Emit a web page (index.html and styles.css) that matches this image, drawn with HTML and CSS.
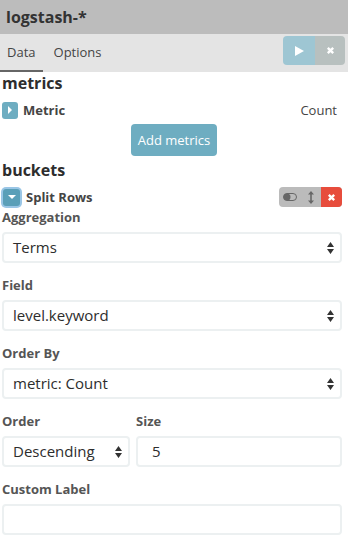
FILE: index.html
```html
<!DOCTYPE html>
<html lang="en">
<head>
    <meta charset="UTF-8">
    <title>logstash-*</title>
    <link rel="stylesheet" href="styles.css">
</head>
<body>
    <div class="sidebar">
        <div class="title">logstash-*</div>
        <div class="tabs">
            <div class="tab active">Data</div>
            <div class="tab">Options</div>
            <div class="actions">
                <button class="btn-apply">
                    <svg width="12" height="12" viewBox="0 0 12 12"><path d="M2 1 L11 6 L2 11 Z" fill="#fff"/></svg>
                </button>
                <button class="btn-discard">
                    <svg width="9" height="9" viewBox="0 0 10 10"><path d="M2 2 L8 8 M8 2 L2 8" stroke="#fff" stroke-width="2.6"/></svg>
                </button>
            </div>
        </div>

        <div class="content">
            <h2 class="first">metrics</h2>
            <div class="agg-row">
                <span class="toggle-icon">
                    <svg width="6" height="8" viewBox="0 0 6 8"><path d="M1 0 L5 4 L1 8 Z" fill="#fff"/></svg>
                </span>
                <span class="agg-name">Metric</span>
                <span class="agg-desc">Count</span>
            </div>
            <div class="add-row">
                <button class="btn-add">Add metrics</button>
            </div>

            <h2>buckets</h2>
            <div class="agg-row">
                <span class="toggle-icon open">
                    <svg width="8" height="6" viewBox="0 0 8 6"><path d="M0 1 L8 1 L4 5 Z" fill="#fff"/></svg>
                </span>
                <span class="agg-name">Split Rows</span>
                <span class="agg-controls">
                    <span class="ctl">
                        <svg width="14" height="8" viewBox="0 0 14 8"><rect x="0.5" y="0.5" width="13" height="7" rx="3.5" fill="none" stroke="#666" stroke-width="1"/><circle cx="4" cy="4" r="3.5" fill="#666"/></svg>
                    </span>
                    <span class="ctl">
                        <svg width="6" height="13" viewBox="0 0 6 13"><path d="M3 0 L6 3.5 L0 3.5 Z M3 13 L6 9.5 L0 9.5 Z" fill="#666"/><rect x="2.2" y="3" width="1.6" height="7" fill="#666"/></svg>
                    </span>
                    <span class="ctl ctl-remove">
                        <svg width="9" height="9" viewBox="0 0 10 10"><path d="M2 2 L8 8 M8 2 L2 8" stroke="#fff" stroke-width="2.6"/></svg>
                    </span>
                </span>
            </div>

            <div class="field">
                <label>Aggregation</label>
                <div class="select">Terms
                    <svg class="caret" width="7" height="12" viewBox="0 0 7 12"><path d="M3.5 0 L7 5 L0 5 Z M3.5 12 L7 7 L0 7 Z" fill="#333"/></svg>
                </div>
            </div>
            <div class="field">
                <label>Field</label>
                <div class="select">level.keyword
                    <svg class="caret" width="7" height="12" viewBox="0 0 7 12"><path d="M3.5 0 L7 5 L0 5 Z M3.5 12 L7 7 L0 7 Z" fill="#333"/></svg>
                </div>
            </div>
            <div class="field">
                <label>Order By</label>
                <div class="select">metric: Count
                    <svg class="caret" width="7" height="12" viewBox="0 0 7 12"><path d="M3.5 0 L7 5 L0 5 Z M3.5 12 L7 7 L0 7 Z" fill="#333"/></svg>
                </div>
            </div>
            <div class="field-row">
                <div class="field order">
                    <label>Order</label>
                    <div class="select">Descending
                        <svg class="caret" width="7" height="12" viewBox="0 0 7 12"><path d="M3.5 0 L7 5 L0 5 Z M3.5 12 L7 7 L0 7 Z" fill="#333"/></svg>
                    </div>
                </div>
                <div class="field size">
                    <label>Size</label>
                    <div class="input num">5</div>
                </div>
            </div>
            <div class="field">
                <label>Custom Label</label>
                <div class="input"></div>
            </div>
        </div>
    </div>
</body>
</html>
```

FILE: styles.css
```css
body {
    margin: 0;
    font-family: "Open Sans", "Liberation Sans", sans-serif;
    color: #444;
    background-color: #fff;
}

.sidebar {
    width: 348px;
}

.title {
    height: 34px;
    line-height: 34px;
    padding-left: 6px;
    background-color: #bcbcbc;
    font-size: 16px;
    font-weight: bold;
    color: #333;
}

.tabs {
    display: flex;
    align-items: stretch;
    height: 38px;
    background-color: #e4e4e4;
}

.tab {
    font-size: 13px;
    line-height: 36px;
    padding: 0 7px;
    margin-right: 4px;
    color: #444;
    border-bottom: 2px solid transparent;
}

.tab.active {
    border-bottom-color: #666;
}

.actions {
    margin-left: auto;
    display: flex;
    margin-top: 2px;
    margin-right: 3px;
    height: 29px;
    border-radius: 4px;
    overflow: hidden;
}

.actions button {
    border: none;
    padding: 0;
    display: flex;
    align-items: center;
    justify-content: center;
    cursor: pointer;
}

.btn-apply {
    width: 32px;
    background-color: #9ec6d3;
}

.btn-discard {
    width: 30px;
    background-color: #b8c0bf;
}

.content {
    padding: 0 6px 0 2px;
}

h2 {
    margin: 0;
    font-size: 16px;
    font-weight: bold;
    color: #2d2d2d;
    line-height: 22px;
    padding-top: 3px;
}

h2.first {
    padding-top: 0;
}

.agg-row {
    display: flex;
    align-items: center;
    height: 22px;
    margin-top: 5px;
}

.toggle-icon {
    width: 16px;
    height: 17px;
    border-radius: 3px;
    background-color: #6eadc1;
    display: flex;
    align-items: center;
    justify-content: center;
    margin-right: 5px;
}

.toggle-icon.open {
    width: 17px;
    height: 17px;
    background-color: #5a9fb8;
    box-shadow: 0 0 0 2px #9ac6e6;
    margin-left: 1px;
    margin-right: 6px;
}

.agg-name {
    font-size: 13px;
    font-weight: bold;
    color: #444;
}

.agg-desc {
    margin-left: auto;
    font-size: 13px;
    color: #444;
    margin-right: 5px;
}

.add-row {
    display: flex;
    justify-content: center;
    margin-top: 3px;
    padding-left: 4px;
}

.btn-add {
    font-family: inherit;
    font-size: 13px;
    color: #fff;
    background-color: #6eadc1;
    border: none;
    border-radius: 4px;
    height: 32px;
    width: 86px;
    padding: 0;
}

.agg-controls {
    margin-left: auto;
    display: flex;
    height: 20px;
    border-radius: 4px;
    overflow: hidden;
    background-color: #bbb;
}

.ctl {
    display: flex;
    align-items: center;
    justify-content: center;
    width: 20px;
}

.ctl:first-child {
    width: 22px;
}

.ctl-remove {
    width: 21px;
    background-color: #e74c3c;
}

label {
    display: block;
    font-size: 13px;
    font-weight: bold;
    color: #555;
    line-height: 18px;
    margin-bottom: 6px;
}

.select, .input {
    height: 31px;
    box-sizing: border-box;
    border: 2px solid #ecf0f1;
    border-radius: 4px;
    font-size: 15px;
    color: #2d2d2d;
    line-height: 27px;
    padding-left: 9px;
    position: relative;
    margin-bottom: 13px;
}

.caret {
    position: absolute;
    right: 6px;
    top: 8px;
}

.input.num {
    padding-left: 14px;
}

.field-row {
    display: flex;
    gap: 6px;
}

.field.order {
    width: 128px;
}

.field.size {
    flex: 1;
}
```
